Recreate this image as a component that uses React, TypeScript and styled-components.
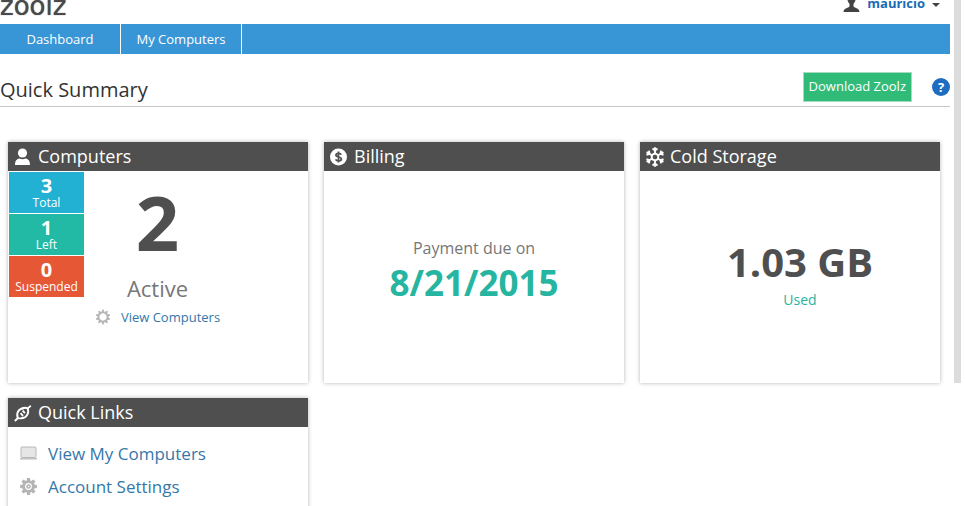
import React from "react";
import styled, { createGlobalStyle } from "styled-components";

const GlobalStyle = createGlobalStyle`
  *, *::before, *::after { box-sizing: border-box; }
  body {
    margin: 0;
    background: #fff;
    color: #333;
    font-family: "Open Sans", "Noto Sans", sans-serif;
    font-size: 13px;
  }
  a { text-decoration: none; color: #3577a9; }
  h1, h2, p, dl, dt, dd, ul { margin: 0; padding: 0; font-weight: 400; }
  svg { display: block; flex: none; }
`;

const Upper = styled.div`
  display: flex;
  gap: 4px;
  padding-right: 4px;
`;

const Main = styled.main`
  flex: 1;
  min-width: 0;
`;

const ScrollTrack = styled.div`
  width: 7px;
  background: #dcdcdc;
`;

const TopBar = styled.header`
  display: flex;
  justify-content: space-between;
  align-items: flex-end;
  height: 24px;
  overflow: hidden;
`;

const Logo = styled.a`
  font-family: "DejaVu Sans", sans-serif;
  font-size: 26px;
  line-height: 32px;
  padding-bottom: 2px;
  color: #4a4a4a;
  text-shadow: 0 0 1px #4a4a4a;
`;

const UserButton = styled.button`
  display: flex;
  align-items: center;
  gap: 7px;
  padding: 0 10px 10px 0;
  border: 0;
  background: none;
  color: #1b6cb5;
  font: 700 13px/20px "Open Sans", sans-serif;
`;

const Caret = styled.span`
  margin-top: 4px;
  border: 4px solid transparent;
  border-top-color: #444;
  border-bottom: 0;
`;

const Nav = styled.nav`
  display: flex;
  height: 30px;
  background: #3896d7;
`;

const NavLink = styled.a`
  width: 121px;
  border-right: 1px solid #fff;
  color: #fff;
  line-height: 31px;
  text-align: center;
`;

const TitleRow = styled.div`
  display: flex;
  align-items: center;
  gap: 20px;
  height: 53px;
  padding-top: 14px;
  border-bottom: 1px solid #c8c8c8;
`;

const Title = styled.h1`
  flex: 1;
  padding-top: 6px;
  font-size: 20px;
  line-height: 28px;
`;

const DownloadButton = styled.button`
  height: 30px;
  padding: 0 5px 2px;
  border: 1px solid #a5dcc0;
  background: #30bb79;
  color: #fff;
  font: 13px/26px "Open Sans", sans-serif;
`;

const HelpButton = styled.button`
  width: 18px;
  height: 18px;
  padding: 0;
  border: 0;
  border-radius: 50%;
  background: #1e6dc0;
  color: #fff;
  font: 700 13px/18px "Open Sans", sans-serif;
`;

const CardGrid = styled.div<{ $top: number; $right: number }>`
  display: grid;
  grid-template-columns: repeat(3, 1fr);
  gap: 16px;
  padding: ${(p) => p.$top}px ${(p) => p.$right}px 0 8px;
`;

const CardBox = styled.section`
  display: flex;
  flex-direction: column;
  min-height: 241px;
  background: #fff;
  box-shadow: 0 0 4px rgba(0, 0, 0, 0.3);
`;

const CardHeader = styled.header`
  display: flex;
  align-items: center;
  gap: 6px;
  height: 29px;
  padding-left: 6px;
  background: #4f4f4f;
  color: #fff;
`;

const CardTitle = styled.h2`
  font-size: 18px;
  line-height: 29px;
`;

const ComputersBody = styled.div`
  display: flex;
  flex: 1;
  padding: 1px;
`;

const Badges = styled.dl`
  display: flex;
  flex-direction: column;
  gap: 1px;
  width: 75px;
`;

const Badge = styled.div<{ $color: string }>`
  display: flex;
  flex-direction: column-reverse;
  justify-content: flex-end;
  height: 41px;
  background: ${(p) => p.$color};
  color: #fff;
  text-align: center;
`;

const BadgeLabel = styled.dt`
  font-size: 12px;
  line-height: 10px;
`;

const BadgeValue = styled.dd`
  font-size: 20px;
  font-weight: 700;
  line-height: 24px;
  padding-top: 2px;
`;

const ActiveSummary = styled.div`
  display: flex;
  flex-direction: column;
  align-items: center;
  width: 147px;
`;

const ActiveCount = styled.p`
  font-size: 76px;
  font-weight: 700;
  line-height: 100px;
  color: #4f4f4f;
`;

const ActiveLabel = styled.p`
  font-size: 22px;
  line-height: 32px;
  color: #777;
`;

const ManageRow = styled.div`
  display: flex;
  align-items: center;
  gap: 10px;
  padding-top: 4px;
  line-height: 18px;
`;

const Centered = styled.div<{ $indent?: number }>`
  display: flex;
  flex-direction: column;
  align-items: center;
  padding: 64px 0 0 ${(p) => p.$indent ?? 0}px;
`;

const DueLabel = styled.p`
  font-size: 16px;
  line-height: 26px;
  color: #777;
`;

const DueDate = styled.p`
  font-size: 35px;
  font-weight: 700;
  line-height: 44px;
  color: #26b5a1;
`;

const StorageSize = styled.p`
  font-size: 40px;
  font-weight: 700;
  line-height: 54px;
  color: #4f4f4f;
`;

const StorageLabel = styled.p`
  font-size: 14px;
  line-height: 22px;
  color: #26b5a1;
`;

const LinkList = styled.ul`
  list-style: none;
  padding: 10px 12px;
`;

const LinkItem = styled.li`
  display: flex;
  align-items: center;
  gap: 11px;
  height: 33px;
  font-size: 17px;
`;

const PersonIcon = () => (
  <svg width="18" height="18" viewBox="0 0 18 18" fill="#fff">
    <circle cx="8.500" cy="5" r="4.600" />
    <path d="M1 17c0-4 1.200-5.800 4.400-6.600 1.800 1.100 4.400 1.100 6.200 0 3.200.8 4.400 2.600 4.400 6.600z" />
  </svg>
);

const BustIcon = () => (
  <svg width="17" height="22" viewBox="0 0 17 22" fill="#444">
    <path d="M8.500 0C5.500 0 4 2.300 4.200 6c.2 3 1.300 4.800 2.300 5.800v2.400C6.300 16 .5 15.800.5 20h16c0-4.200-5.800-4-6-5.800v-2.400c1-1 2.100-2.800 2.300-5.800C13 2.300 11.500 0 8.500 0z" />
  </svg>
);

const DollarIcon = () => (
  <svg width="18" height="18" viewBox="0 0 18 18">
    <circle cx="8.500" cy="9" r="8.500" fill="#fff" />
    <path
      d="M11.300 6.600c-.5-.9-1.500-1.300-2.700-1.300-1.600 0-2.700.7-2.700 1.800 0 2.500 5.500 1.300 5.500 3.900 0 1.100-1.200 1.800-2.800 1.800-1.400 0-2.500-.5-3-1.500M8.500 3.500v11"
      fill="none"
      stroke="#4f4f4f"
      strokeWidth="1.700"
    />
  </svg>
);

const SnowflakeIcon = () => (
  <svg width="18" height="20" viewBox="-9 -10 18 20" fill="none" stroke="#fff" strokeWidth="1.900">
    {[0, 60, 120, 180, 240, 300].map((a) => (
      <path key={a} transform={`rotate(${a})`} d="M0 -2.500V-9.700M-2.500 -8.400L0 -6.400L2.500 -8.400" />
    ))}
    <path d="M0 -3.700L3.200 -1.850V1.850L0 3.700L-3.200 1.850V-1.850z" />
  </svg>
);

const PlugIcon = () => (
  <svg width="18" height="18" viewBox="0 0 18 18" fill="none" stroke="#fff" strokeWidth="1.900">
    <path d="M.8 17L4 14M13.500 4.600L16.800 1.800" />
    <path d="M10.200 4C5.500 4.200 1.800 8.200 3.700 13.700C5.600 14.800 7.800 14.500 9.800 13.200M6.600 9.200L9 11.800" />
    <path d="M7.400 14.300C12 14 15.600 9.600 13.700 4.500C12 3.500 9.800 3.700 7.800 5M8.600 6.600L11 9.200" />
  </svg>
);

const GearOutlineIcon = () => (
  <svg width="16" height="16" viewBox="-8 -8 16 16" fill="none" stroke="#b5b5b5">
    <circle r="4.500" strokeWidth="1.700" />
    {Array.from({ length: 10 }, (_, i) => (
      <path key={i} transform={`rotate(${i * 36})`} d="M-1.600 -4.700L-.6 -7.400H.6L1.600 -4.700z" fill="#b5b5b5" stroke="none" />
    ))}
  </svg>
);

const GearIcon = () => (
  <svg width="17" height="17" viewBox="-8.500 -8.500 17 17" fill="#b4b4b4">
    {Array.from({ length: 8 }, (_, i) => (
      <path key={i} transform={`rotate(${i * 45})`} d="M-1.900 -5L-1.500 -8.400H1.500L1.900 -5z" />
    ))}
    <circle r="6.200" />
    <circle r="2.900" fill="none" stroke="#fff" strokeWidth="1.100" />
    <circle r=".8" fill="#fff" />
  </svg>
);

const LaptopIcon = () => (
  <svg width="17" height="15" viewBox="0 0 17 15">
    <rect x="1" y="1" width="15" height="10.500" rx="1" fill="#e6e6e6" stroke="#b8b8b8" />
    <path d="M0 12.200h17v1.300H0z" fill="#b8b8b8" />
  </svg>
);

function Card({ icon, title, children }: { icon: React.ReactNode; title: string; children: React.ReactNode }) {
  return (
    <CardBox>
      <CardHeader>
        {icon}
        <CardTitle>{title}</CardTitle>
      </CardHeader>
      {children}
    </CardBox>
  );
}

const badges = [
  { value: 3, label: "Total", color: "#22b1d3" },
  { value: 1, label: "Left", color: "#22b9a5" },
  { value: 0, label: "Suspended", color: "#e65736" },
];

export default function App() {
  return (
    <>
      <GlobalStyle />
      <Upper>
        <Main>
          <TopBar>
            <Logo href="#">zoolz</Logo>
            <UserButton type="button">
              <BustIcon />
              mauricio
              <Caret />
            </UserButton>
          </TopBar>
          <Nav>
            <NavLink href="#">Dashboard</NavLink>
            <NavLink href="#">My Computers</NavLink>
          </Nav>
          <TitleRow>
            <Title>Quick Summary</Title>
            <DownloadButton type="button">Download Zoolz</DownloadButton>
            <HelpButton type="button" aria-label="Help">?</HelpButton>
          </TitleRow>
          <CardGrid $top={35} $right={10}>
            <Card icon={<PersonIcon />} title="Computers">
              <ComputersBody>
                <Badges>
                  {badges.map((b) => (
                    <Badge key={b.label} $color={b.color}>
                      <BadgeLabel>{b.label}</BadgeLabel>
                      <BadgeValue>{b.value}</BadgeValue>
                    </Badge>
                  ))}
                </Badges>
                <ActiveSummary>
                  <ActiveCount>2</ActiveCount>
                  <ActiveLabel>Active</ActiveLabel>
                  <ManageRow>
                    <GearOutlineIcon />
                    <a href="#">View Computers</a>
                  </ManageRow>
                </ActiveSummary>
              </ComputersBody>
            </Card>
            <Card icon={<DollarIcon />} title="Billing">
              <Centered>
                <DueLabel>Payment due on</DueLabel>
                <DueDate>8/21/2015</DueDate>
              </Centered>
            </Card>
            <Card icon={<SnowflakeIcon />} title="Cold Storage">
              <Centered $indent={20}>
                <StorageSize>1.03 GB</StorageSize>
                <StorageLabel>Used</StorageLabel>
              </Centered>
            </Card>
          </CardGrid>
        </Main>
        <ScrollTrack />
      </Upper>
      <CardGrid $top={15} $right={25}>
        <Card icon={<PlugIcon />} title="Quick Links">
          <LinkList>
            <LinkItem>
              <LaptopIcon />
              <a href="#">View My Computers</a>
            </LinkItem>
            <LinkItem>
              <GearIcon />
              <a href="#">Account Settings</a>
            </LinkItem>
          </LinkList>
        </Card>
      </CardGrid>
    </>
  );
}
